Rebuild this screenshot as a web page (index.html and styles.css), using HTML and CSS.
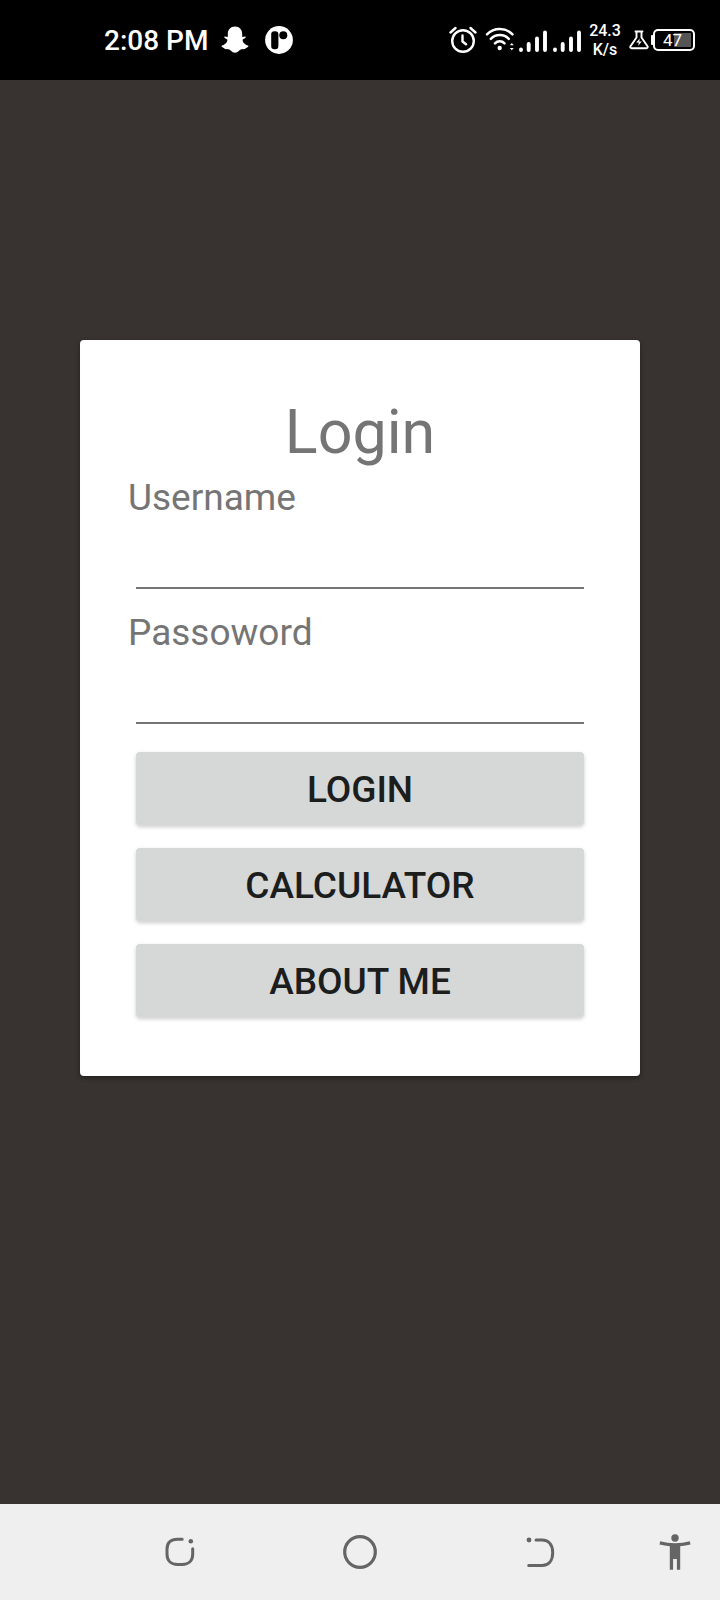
FILE: index.html
```html
<!DOCTYPE html>
<html lang="en">
<head>
<meta charset="utf-8">
<title>Login</title>
<link rel="stylesheet" href="styles.css">
</head>
<body>
<div class="screen">
  <header class="status">
    <div class="status-left">
      <span class="time">2:08 PM</span>
      <svg class="snap" width="28" height="28" viewBox="0 0 28 28" fill="#fff"><path d="M14 .5C9.500.5 6.800 3.800 6.800 8v3l-3-.6c-.8.2-.8 1 0 1.500l2.500 1.500c.4 2.500-1.800 5-5.400 6.200-.9.600 0 1.700 1.500 2.100.8.200 1.200.5 1.400 1.400l3.700.2c2.200.3 3.200 3.400 6.500 3.400s4.300-3.100 6.500-3.400l3.700-.2c.2-.9.600-1.200 1.400-1.400 1.500-.4 2.400-1.500 1.500-2.100-3.600-1.200-5.800-3.700-5.400-6.200l2.500-1.500c.8-.5.8-1.300 0-1.500l-3 .6V8C21.200 3.800 18.500.5 14 .5z"/></svg>
      <svg class="app" width="28" height="28" viewBox="0 0 28 28"><circle cx="14" cy="14" r="13.900" fill="#fff"/><rect x="6.200" y="5.300" width="7.200" height="18" rx="3.200" fill="#000"/><circle cx="18.300" cy="9.300" r="4" fill="#000"/></svg>
    </div>
    <div class="status-right">
      <svg width="28" height="28" viewBox="0 0 28 28" fill="none" stroke="#fff" stroke-width="2.400" stroke-linecap="round" stroke-linejoin="round"><circle cx="14" cy="15" r="10.800"/><path d="M13.500 9.500v6l3.500 2.800M1.500 6.500l5-4.500M26.500 6.500l-5-4.500"/></svg>
      <svg class="wifi" width="30" height="28" viewBox="0 0 30 28" fill="none" stroke="#fff" stroke-width="2.500" stroke-linecap="round"><path d="M2 8.300c7-7 18.500-7 25.500 0M5.800 12.800c5-5 13-5 18 0M10 17.300c2.500-2.600 7-2.600 9.500 0"/><circle cx="14.700" cy="22" r="2.200" fill="#fff" stroke="none"/><path d="M24.800 19.300l2-2.300 2 2.300zM24.800 22l2 2.300 2-2.300z" fill="#fff" stroke="none"/></svg>
      <svg class="bars" width="64" height="28" viewBox="0 0 64 28" fill="none" stroke="#fff" stroke-width="3.900" stroke-linecap="round"><path d="M3 23.500v.5M10.700 18v6M19 12.500v11.500M27 6.500v17.500M37 23.500v.5M44.700 18v6M53 12.500v11.500M61 6.500v17.500"/></svg>
      <div class="speed"><span>24.3</span><span>K/s</span></div>
      <svg class="flask" width="20" height="20" viewBox="0 0 20 20" fill="none" stroke="#fff" stroke-width="1.900" stroke-linejoin="round" stroke-linecap="round"><path d="M6.500 1.500h7M7.500 2v5.500L1.500 16.200c-.6 1.200 0 2 1 2h15c1 0 1.600-.8 1-2L12.500 7.500V2"/><path d="M10.800 8.500l-3.600 4h2.600l-.6 3.300 3.600-4.300h-2.600z" fill="#fff" stroke="none"/></svg>
      <span class="battery-tip"></span>
      <div class="battery"><span>47</span></div>
    </div>
  </header>
  <main class="content">
    <form class="card">
      <h1 class="title">Login</h1>
      <label class="label" for="user">Username</label>
      <input class="field" id="user" type="text">
      <label class="label" for="pass">Passoword</label>
      <input class="field" id="pass" type="password">
      <div class="actions">
        <button class="button" type="button">LOGIN</button>
        <button class="button" type="button">CALCULATOR</button>
        <button class="button" type="button">ABOUT ME</button>
      </div>
    </form>
  </main>
  <nav class="navbar">
    <svg width="32" height="36" viewBox="0 0 32 36" fill="none" stroke="#656565" stroke-width="3" stroke-linecap="round"><path d="M18.200 5.300h-4.700C6.500 5.300 3 9 3 15v5.200c0 6.500 4 10.300 10.500 10.300h4.700c6.500 0 10.500-3.800 10.500-10.300v-5.400"/><circle cx="26.800" cy="7.200" r="2.300" fill="#656565" stroke="none"/></svg>
    <svg width="36" height="36" viewBox="0 0 36 36" fill="none" stroke="#656565" stroke-width="3.200"><circle cx="18" cy="18" r="15.300"/></svg>
    <svg width="30" height="36" viewBox="0 0 30 36" fill="none" stroke="#656565" stroke-width="3" stroke-linecap="round"><path d="M11 6h6.200c6.500 0 10.500 5 10.500 12.700s-4 12.700-10.500 12.700H3.700"/><circle cx="4" cy="6" r="2.400" fill="#656565" stroke="none"/></svg>
    <svg width="32" height="36" viewBox="0 0 32 36" fill="#656565"><circle cx="16" cy="4" r="3.700"/><path d="M1.200 7.300C10.500 9.800 21.500 9.800 30.800 7.300l.7 3.200c-3.300.9-6.700 1.400-10.300 1.700v23.500h-3.300V25h-3.800v10.700h-3.300V12.200C7.200 11.900 3.800 11.400.5 10.500z"/></svg>
  </nav>
</div>
</body>
</html>
```

FILE: styles.css
```css
* { box-sizing: border-box; }
body { margin: 0; font-family: Roboto, "Liberation Sans", sans-serif; }
svg { display: block; flex: none; }
.screen { width: 720px; height: 1600px; display: flex; flex-direction: column; background: #383330; }
.status { height: 80px; padding: 0 25px 0 104px; display: flex; justify-content: space-between; align-items: center; background: #000; color: #fff; }
.status-left, .status-right { display: flex; align-items: center; }
.time { width: 117px; font-size: 28px; font-weight: 500; line-height: 32px; white-space: nowrap; padding-top: 2px; }
.app { margin-left: 16px; }
.wifi { margin-left: 8px; }
.bars { margin-left: 3px; }
.speed { width: 32px; margin: 0 8px 0 7px; display: flex; flex-direction: column; align-items: center; font-size: 16px; font-weight: 500; line-height: 19px; }
.flask { margin-right: 2px; }
.battery-tip { width: 3px; height: 10px; margin-right: 0; border-radius: 1px; background: #fff; }
.battery { width: 42px; height: 22px; margin-left: -1px; border: 2px solid #fff; border-radius: 5px; display: flex; justify-content: center; align-items: center; padding: 0 3px 0 0; font-size: 17px; line-height: 18px; background: linear-gradient(90deg, transparent 19px, #555 19px) 0 2px / 36px 14px no-repeat; }
.content { flex: 1; padding: 260px 80px 0; }
.card { height: 736px; padding: 52px 48px 0; display: flex; flex-direction: column; border-radius: 4px; background: #fff; box-shadow: 0 2px 5px rgba(0,0,0,.4); }
.title { margin: 0; font-size: 61px; line-height: 81px; font-weight: 400; color: #757575; text-align: center; }
.label { height: 48px; padding-top: 1px; font-size: 37px; line-height: 48px; color: #757575; }
.field { width: 448px; height: 68px; margin: 0 8px 19px; padding: 0; border: 0; border-bottom: 2px solid #757575; border-radius: 0; background: none; font: 36px Roboto, sans-serif; outline: none; }
.actions { display: flex; flex-direction: column; gap: 23px; padding: 9px 8px 0; }
.button { height: 73px; padding: 2px 0 0; border: 0; border-radius: 4px; background: #d6d8d7; box-shadow: 0 2px 4px rgba(0,0,0,.2); color: #1c1d1d; font: 500 37px/48px Roboto, sans-serif; }
.navbar { height: 96px; padding: 0 29px 0 164px; display: flex; align-items: center; justify-content: space-between; background: #efefef; }
.navbar svg:nth-child(2) { margin-left: 42px; }
.navbar svg:nth-child(3) { margin-left: 42px; }
```
